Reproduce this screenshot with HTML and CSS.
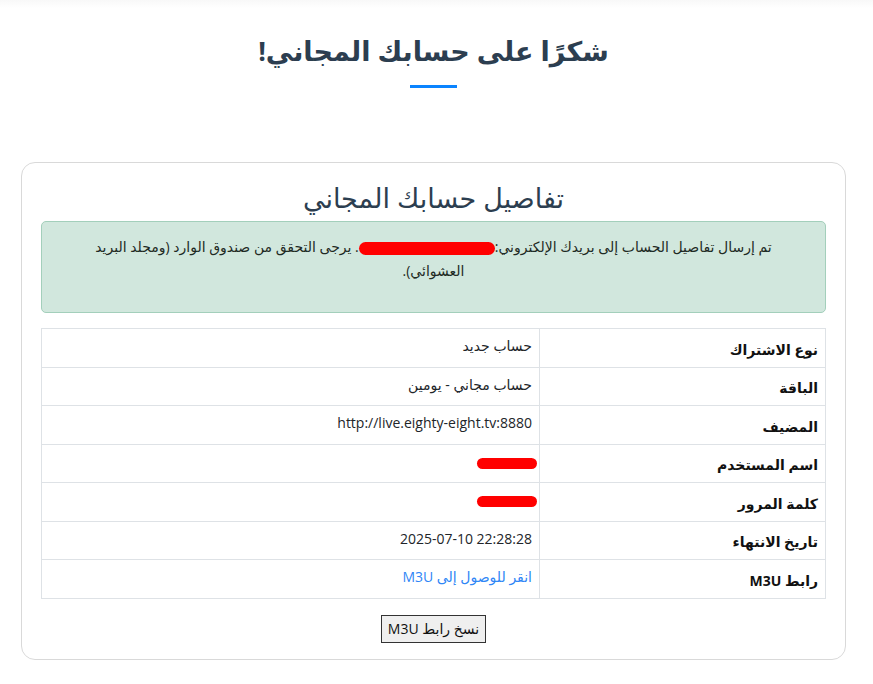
FILE: index.html
```html
<!DOCTYPE html>
<html lang="ar" dir="rtl">
<head>
    <meta charset="UTF-8">
    <meta name="viewport" content="width=device-width, initial-scale=1.0">
    <title>شكرًا على حسابك المجاني!</title>
    <link rel="stylesheet" href="styles.css">
</head>
<body>
    <div class="topbar"></div>
    <div class="page">
        <div class="hero">
            <h1>شكرًا على حسابك المجاني!</h1>
            <div class="underline"></div>
        </div>

        <div class="card">
            <h2>تفاصيل حسابك المجاني</h2>

            <div class="alert">
                <p>تم إرسال تفاصيل الحساب إلى بريدك الإلكتروني:<span class="redact redact-email"></span>. يرجى التحقق من صندوق الوارد (ومجلد البريد العشوائي).</p>
            </div>

            <table class="details">
                <tr>
                    <th>نوع الاشتراك</th>
                    <td>حساب جديد</td>
                </tr>
                <tr>
                    <th>الباقة</th>
                    <td>حساب مجاني - يومين</td>
                </tr>
                <tr>
                    <th>المضيف</th>
                    <td><span dir="ltr">http://live.eighty-eight.tv:8880</span></td>
                </tr>
                <tr>
                    <th>اسم المستخدم</th>
                    <td><span class="redact redact-field"></span></td>
                </tr>
                <tr>
                    <th>كلمة المرور</th>
                    <td><span class="redact redact-field"></span></td>
                </tr>
                <tr>
                    <th>تاريخ الانتهاء</th>
                    <td><span dir="ltr">2025-07-10 22:28:28</span></td>
                </tr>
                <tr>
                    <th>رابط M3U</th>
                    <td><a href="#">انقر للوصول إلى M3U</a></td>
                </tr>
            </table>

            <div class="actions">
                <button type="button">نسخ رابط M3U</button>
            </div>
        </div>
    </div>
</body>
</html>
```

FILE: styles.css
```css
body {
    margin: 0;
    font-family: "Open Sans", "DejaVu Sans", sans-serif;
    color: #212529;
    background: #fff;
}

.topbar {
    height: 8px;
    background: linear-gradient(#f8f8f8, #fff);
}

.page {
    padding-left: 21px;
    padding-right: 27px;
}

.hero {
    text-align: center;
    padding-top: 24px;
    margin-bottom: 74px;
}

.hero h1 {
    margin: 0;
    font-size: 27px;
    font-weight: bold;
    color: #2c3e50;
    line-height: 38px;
}

.underline {
    width: 47px;
    height: 3px;
    background: #0a84ff;
    margin: 15px auto 0;
}

.card {
    border: 1px solid #d9d9d9;
    border-radius: 14px;
    padding: 16px 19px 16px;
}

.card h2 {
    margin: 0 0 4px;
    text-align: center;
    font-size: 27px;
    font-weight: normal;
    color: #2c3e50;
    line-height: 38px;
}

.alert {
    background: #d1e7dd;
    border: 1px solid #a3cfbb;
    border-radius: 5px;
    padding: 13px 40px 29px;
    text-align: center;
    color: #1e2a24;
}

.alert p {
    margin: 0;
    font-size: 14px;
    line-height: 24px;
}

.redact {
    display: inline-block;
    background: #f00;
    border-radius: 8px;
    vertical-align: middle;
}

.redact-email {
    width: 136px;
    height: 13px;
}

.redact-field {
    width: 60px;
    height: 11px;
    border-radius: 6px;
    margin-right: -5px;
}

.details {
    width: 100%;
    margin-top: 15px;
    border-collapse: collapse;
    font-size: 14px;
    line-height: 20px;
}

.details th,
.details td {
    border: 1px solid #dee2e6;
    height: 38.5px;
    box-sizing: border-box;
    padding: 0 7px;
    text-align: right;
}

.details th {
    width: 286px;
    font-size: 14px;
    font-weight: bold;
    padding-top: 4px;
    color: #111;
}

.details td {
    padding-bottom: 3px;
}

.details a {
    color: #2f86f6;
    text-decoration: none;
}

.actions {
    text-align: center;
    margin-top: 16px;
}

.actions button {
    font-family: "Open Sans", "DejaVu Sans", sans-serif;
    font-size: 14px;
    line-height: 19px;
    background: #efefef;
    border: 1px solid #333;
    border-radius: 0;
    padding: 3px 6px 4px;
    color: #111;
    cursor: pointer;
}
```
